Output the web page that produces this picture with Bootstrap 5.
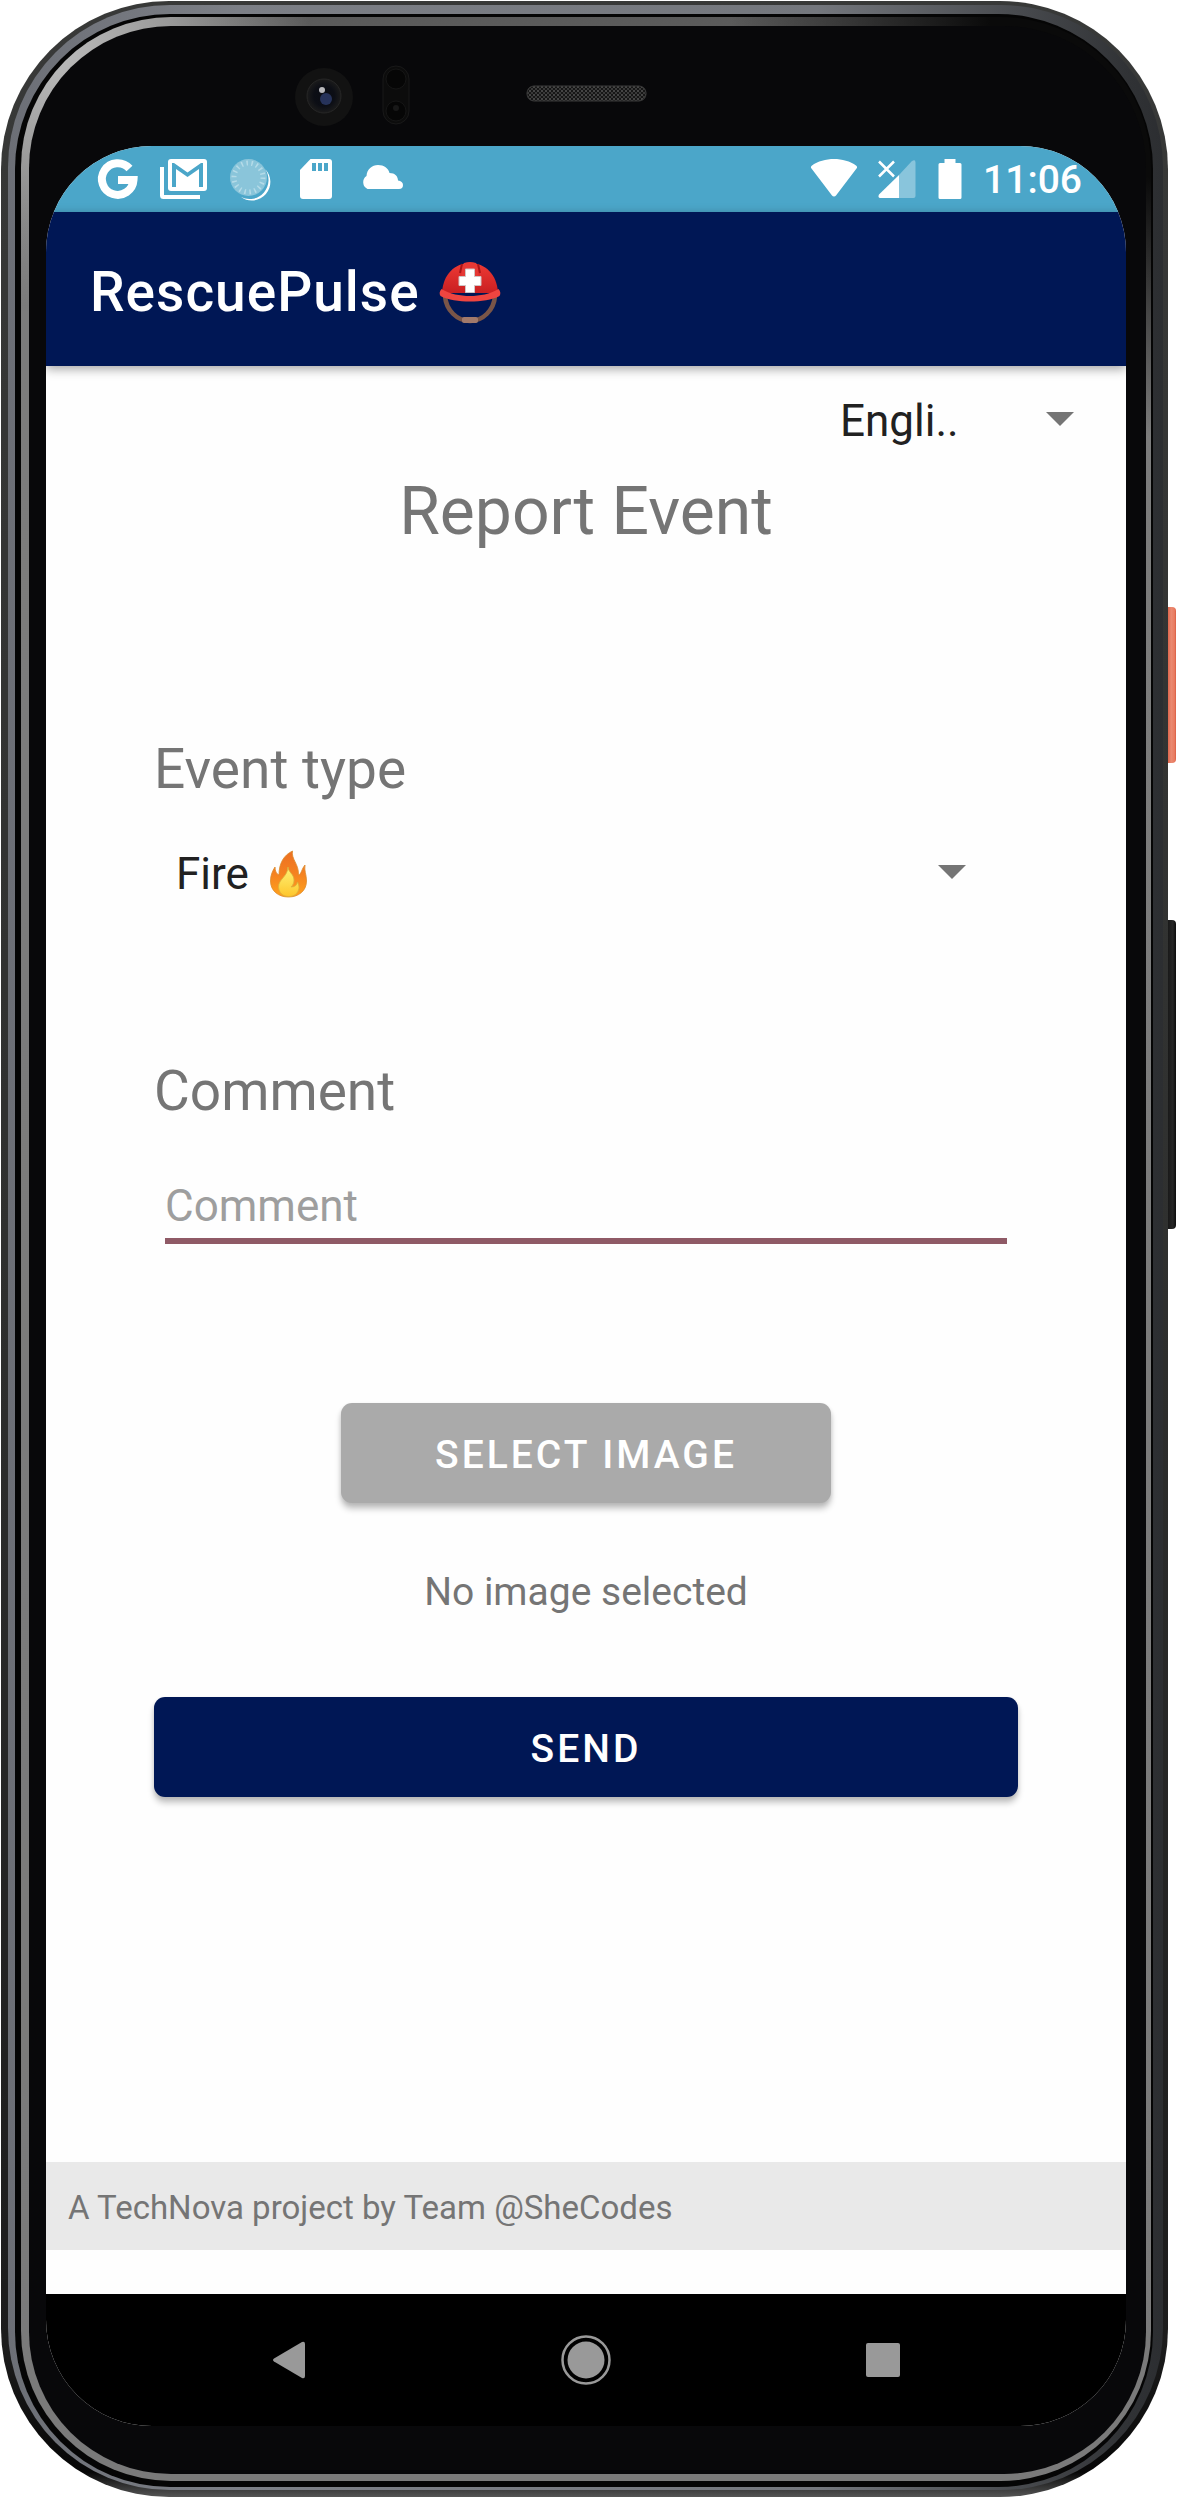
<!DOCTYPE html>
<html lang="en">
<head>
<meta charset="utf-8">
<meta name="viewport" content="width=device-width, initial-scale=1">
<title>RescuePulse</title>
<link rel="stylesheet" href="https://cdn.jsdelivr.net/npm/bootstrap@5.3.0/dist/css/bootstrap.min.css">
<style>
  body { font-family: Roboto, "Liberation Sans", sans-serif; background: #fff; color: #212121; }
  .stage { min-height: 100vh; padding: 1px 10px 1px 1px; }

  /* device shell: nested rims, outermost first */
  .shell, .shell div.rim { display: flex; flex-direction: column; flex: 1; }
  .shell { position: relative; background: linear-gradient(to bottom, #383938, #2f302f 50%, #1c1c1c 94%, #060606 99%, #555 100%); border-radius: 168px; padding: 4px 5px 7px 7px; }
  .rim-metal { background: linear-gradient(to right, #6c6f76 0, #7c7f86 20%, #74777d 70%, #303235 97%, #2c2e31 100%); border-radius: 162px; padding: 9px 10px 3px 7px; }
  .rim-gap { background: #050505; border-radius: 155px; padding: 3px 2px 6px 6px; }
  .rim-glass { background:
      radial-gradient(circle at 100% 0, #0a0a0a 0, #0a0a0a 160px, transparent 420px),
      radial-gradient(circle at 30px 30px, #bdbdbd 0, #999 120px, transparent 260px),
      linear-gradient(to bottom, #5a5a5a 0, #7c7c7c 12%, #7a7a7a 100%); border-radius: 150px; padding: 9px 5px 7px 8px; }
  .rim-face { background: #08080a; border-radius: 142px; padding: 0 20px 48px 17px; }
  .side-key { position: absolute; left: 100%; width: 8px; border-radius: 0 4px 4px 0; }
  .key-power { top: 606px; height: 156px; background: linear-gradient(to right, #e0664c, #ea8a72 40%, #e97c61 80%, #d85e44); }
  .key-volume { top: 919px; height: 309px; background: linear-gradient(to right, #191919, #262626 60%, #0c0c0c); }
  .sensor-strip { height: 120px; }

  .screen { flex: 1; border-radius: 106px; overflow: hidden; background: #fefefe; }
  .status { height: 66px; background: #4ba6c9; color: #fff; padding: 0 44px 0 48px; }
  .status-left { gap: 18px; }
  .status-right { gap: 19px; }
  .clock { font-size: 39px; line-height: 44px; font-weight: 500; padding-top: 2px; }
  .appbar { height: 154px; background: #001755; color: #fff; padding: 6px 44px 0; gap: 18px; box-shadow: 0 3px 10px rgba(0,0,0,.36); z-index: 1; }
  .app-title { font-size: 55px; line-height: 64px; font-weight: 500; letter-spacing: 1px; }

  .picker { position: relative; }
  .picker select { appearance: none; border: 0; background: transparent; font-size: 44px; line-height: 52px; height: 66px; color: #212121; padding: 0 80px 0 22px; width: 100%; border-radius: 0; }
  .picker::after { content: ""; position: absolute; top: 24px; right: 52px; border: 14px solid transparent; border-top-color: #757575; border-bottom: 0; pointer-events: none; }
  .picker-lang { width: 308px; margin-top: 22px; }
  .picker-type { margin-top: 35px; }
  .flame { position: absolute; left: 112px; top: 8px; pointer-events: none; }

  .page-heading { font-size: 66px; line-height: 88px; font-weight: 400; color: #757575; margin: 14px 0 0; }
  .report { padding: 176px 108px 0; }
  .field-label { font-size: 55px; line-height: 74px; color: #757575; }
  .label-comment { margin-top: 147px; }
  .comment-box { border: 0; border-bottom: 6px solid #8f5a66; background: transparent; height: 72px; margin: 44px 11px 0; padding: 2px 0 0; font-size: 44px; line-height: 52px; color: #212121; }
  .comment-box::placeholder { color: #9e9e9e; opacity: 1; }
  .btn-raised { height: 100px; border: 0; border-radius: 11px; padding: 10px 12px 6px; color: #fff; font-size: 39px; line-height: 52px; font-weight: 500; letter-spacing: 3px; text-transform: uppercase; box-shadow: 0 6px 6px rgba(0,0,0,.22), 0 2px 4px rgba(0,0,0,.1); }
  .btn-raised:hover { color: #fff; }
  .btn-pick { width: 490px; margin-top: 159px; background: #aaa !important; }
  .btn-submit { margin-top: 79px; background: #001755 !important; }
  .pick-state { font-size: 39px; line-height: 52px; color: #757575; margin: 63px 0 0; }
  .credit { height: 88px; background: #e9e9e9; color: #757575; font-size: 33px; line-height: 44px; padding: 4px 22px 0; margin-bottom: 44px; }
  .softkeys { height: 132px; background: #000; padding: 0 94px; }
  .softkeys button { flex: 1; border: 0; background: transparent; padding: 0; }
</style>
</head>
<body>
<div class="stage d-flex">
<div class="shell">
  <span class="side-key key-power"></span>
  <span class="side-key key-volume"></span>
  <div class="rim rim-metal"><div class="rim rim-gap"><div class="rim rim-glass"><div class="rim rim-face">

    <svg class="sensor-strip w-100" viewBox="17 0 1080 120" preserveAspectRatio="xMidYMid meet" aria-hidden="true">
      <defs>
        <pattern id="mesh" width="4" height="4" patternUnits="userSpaceOnUse"><rect width="4" height="4" fill="#161616"/><circle cx="1" cy="1" r="1" fill="#555"/><circle cx="3" cy="3" r="1" fill="#444"/></pattern>
        <radialGradient id="lens"><stop offset="0" stop-color="#0a0c14"/><stop offset=".6" stop-color="#0c0e15"/><stop offset="1" stop-color="#1b1b1b"/></radialGradient>
      </defs>
      <circle cx="295" cy="71" r="29" fill="#121212"/>
      <circle cx="295" cy="70" r="17" fill="url(#lens)" stroke="#262626" stroke-width="1"/>
      <circle cx="297" cy="73" r="6" fill="#2b3a66" opacity=".85"/>
      <circle cx="293" cy="64" r="3" fill="#b9b9bd"/>
      <rect x="354" y="40" width="26" height="58" rx="13" fill="#0c0c0c" stroke="#191919"/>
      <circle cx="367" cy="53" r="10" fill="#060606" stroke="#161616"/>
      <circle cx="367" cy="85" r="10" fill="#060606" stroke="#161616"/>
      <circle cx="367" cy="82" r="3" fill="#181818"/>
      <rect x="498" y="60" width="119" height="15" rx="7" fill="url(#mesh)" stroke="#3a3a3a"/>
    </svg>

    <div class="screen d-flex flex-column">
      <div class="status d-flex align-items-center justify-content-between">
        <div class="status-left d-flex align-items-center">
          <svg width="48" height="44" viewBox="0 0 48 44" fill="none" stroke="#fff" stroke-width="8" aria-label="Google"><path d="M35.500 10.500A15.800 15.800 0 1 0 39.500 22H24" transform="translate(0 1)"/></svg>
          <svg width="48" height="44" viewBox="0 0 48 44" aria-label="Gmail"><path d="M2 10v28.500a1.500 1.500 0 0 0 1.500 1.500h36.500" fill="none" stroke="#fff" stroke-width="4"/><rect x="8" y="2" width="39" height="32" rx="3" fill="#fff"/><path d="M12 6v24h4V12L27.500 20 39 12v18h4V6h-2L27.500 15.500 14 6z" fill="#4ba6c9"/></svg>
          <svg width="48" height="44" viewBox="0 0 48 44" aria-label="Syncing"><circle cx="22.500" cy="20.500" r="18.500" fill="#8ac5da"/><circle cx="22.500" cy="20.500" r="14.500" fill="none" stroke="#b4dbe8" stroke-width="5" stroke-dasharray="1.500 3.560"/><path d="M39 12a19 19 0 0 1-24 28 18.500 18.500 0 0 0 24-28z" fill="#fff"/></svg>
          <svg width="48" height="44" viewBox="0 0 48 44" aria-label="Storage card"><path d="M18.500 2H37a3 3 0 0 1 3 3v34a3 3 0 0 1-3 3H11a3 3 0 0 1-3-3V13z" fill="#fff"/><path d="M20 6h4v8h-4zm6 0h4v8h-4zm6 0h4v8h-4z" fill="#4ba6c9"/></svg>
          <svg width="48" height="44" viewBox="0 0 48 44" aria-label="Cloud"><path d="M9.500 32a7.500 7.500 0 0 1-1-13C9 12 14 8 20 8c6 0 10.500 3.500 11.500 8 5.500 0 8.500 3.500 8.500 7.500 3 .5 5 2 5 4.500a4 4 0 0 1-4 4z" fill="#fff"/></svg>
        </div>
        <div class="status-right d-flex align-items-center">
          <svg width="48" height="44" viewBox="0 0 48 44" aria-label="Wi-Fi"><path d="M1.500 11.500a2 2 0 0 1 .2-2.800C14-.2 34-.2 46.300 8.700a2 2 0 0 1 .2 2.800L26 38.500a2.500 2.500 0 0 1-4 0z" fill="#fff"/></svg>
          <svg width="40" height="44" viewBox="0 0 40 44" aria-label="No mobile signal"><path d="M34.500 4.500Q38.500 1.500 38.500 5.500V39a2 2 0 0 1-2 2H22V18z" fill="#fff" opacity=".35"/><path d="M22 18V41H3.500C1 41 1 38.500 2.500 37z" fill="#fff"/><path d="M2 4.500l15 15m0-15l-15 15" stroke="#fff" stroke-width="2.500"/></svg>
          <svg width="28" height="44" viewBox="0 0 28 44" aria-label="Battery full"><path d="M8.500 2h11v4H24a1.500 1.500 0 0 1 1.500 1.500v33A1.500 1.500 0 0 1 24 42H4a1.500 1.500 0 0 1-1.500-1.500v-33A1.500 1.500 0 0 1 4 6h4.500z" fill="#fff"/></svg>
          <span class="clock">11:06</span>
        </div>
      </div>

      <header class="appbar d-flex align-items-center">
        <span class="app-title">RescuePulse</span>
        <svg width="64" height="64" viewBox="0 0 64 64" aria-label="Rescue helmet">
          <defs><linearGradient id="dome" x1="0" y1="0" x2="0" y2="1"><stop offset="0" stop-color="#ee3a34"/><stop offset="1" stop-color="#c91f22"/></linearGradient></defs>
          <path d="M7 36C8 50 19 61 32 61s24-11 25-25" fill="none" stroke="#795548" stroke-width="4.500"/>
          <rect x="24" y="57" width="16" height="6" rx="2" fill="#a1796b"/>
          <path d="M4 33C5 14 17 3 32 3s27 11 28 30z" fill="url(#dome)"/>
          <path d="M24 9l2-6q6-2 12 0l2 6 1 12H23z" fill="#e53935"/>
          <path d="M24 4l-2 9m18-9l2 9" stroke="#a81518" stroke-width="2" fill="none"/>
          <path d="M3.500 29C12 34 22 36 32 36s20-2 28.500-7c2 2 2.500 5 1 7C54 40 43 41.500 32 41.500S10 40 2.500 36c-1.500-2-1-5 1-7z" fill="#ef4540"/>
          <path d="M27.500 9h9v7.500H43v9h-6.500v7h-9v-7H21v-9h6.500z" fill="#fff" stroke="#cfc5c5"/>
        </svg>
      </header>

      <main class="flex-grow-1">
        <div class="picker picker-lang ms-auto">
          <select aria-label="Language"><option>Engli..</option></select>
        </div>
        <h1 class="page-heading text-center">Report Event</h1>
        <form class="report d-flex flex-column">
          <label class="field-label" for="eventType">Event type</label>
          <div class="picker picker-type">
            <select id="eventType"><option>Fire</option></select>
            <svg class="flame" width="44" height="50" viewBox="0 0 44 50" aria-hidden="true">
              <defs>
                <linearGradient id="fl" x1="0" y1="0" x2="0" y2="1"><stop offset="0" stop-color="#ec6f22"/><stop offset=".5" stop-color="#f58220"/><stop offset="1" stop-color="#ffa21d"/></linearGradient>
                <linearGradient id="fi" x1="0" y1="0" x2="0" y2="1"><stop offset="0" stop-color="#fff176"/><stop offset=".6" stop-color="#fdd94b"/><stop offset="1" stop-color="#ffc52b"/></linearGradient>
              </defs>
              <path d="M26.500 2C25 10 33 15 32.500 26c3-1 3-6 6.500-10-1 6 1.500 9 1.500 16 0 10-8 16-18 16S4.500 42 4.500 32c0-6 2-10 4.500-14 0 4 1.500 7 4 8C13 14 18 6 26.500 2z" fill="url(#fl)" stroke="#dc8a2c" stroke-width=".8"/>
              <path d="M22 18c0 5 6 7 6 13 0 3-1 5-3 7 4 0 6-2 6.500-5 1 2 1.500 4 1.500 6-1 6-5 8.500-10.500 8.500S13 44 12.500 38c0-8 9-10 9.500-20z" fill="url(#fi)" stroke="#d9b23c" stroke-width=".8"/>
            </svg>
          </div>
          <label class="field-label label-comment" for="comment">Comment</label>
          <input class="comment-box" id="comment" type="text" placeholder="Comment">
          <button type="button" class="btn btn-raised btn-pick align-self-center">Select image</button>
          <p class="pick-state text-center">No image selected</p>
          <button type="submit" class="btn btn-raised btn-submit">Send</button>
        </form>
      </main>

      <footer class="credit d-flex align-items-center">A TechNova project by Team @SheCodes</footer>

      <nav class="softkeys d-flex">
        <button type="button" aria-label="Back"><svg width="52" height="52" viewBox="0 0 52 52"><path d="M11 24.500L39 8Q42 7 42 10v32q0 3-3 2L11 27.500q-2-1.500 0-3z" fill="#999"/></svg></button>
        <button type="button" aria-label="Home"><svg width="52" height="52" viewBox="0 0 52 52"><circle cx="26" cy="26" r="23.500" fill="none" stroke="#999" stroke-width="2.500"/><circle cx="26" cy="26" r="18.500" fill="#999"/></svg></button>
        <button type="button" aria-label="Recent apps"><svg width="52" height="52" viewBox="0 0 52 52"><rect x="9" y="9" width="34" height="34" rx="2" fill="#999"/></svg></button>
      </nav>
    </div>

  </div></div></div></div>
</div>
</div>
<script src="https://cdn.jsdelivr.net/npm/bootstrap@5.3.0/dist/js/bootstrap.bundle.min.js"></script>
</body>
</html>
